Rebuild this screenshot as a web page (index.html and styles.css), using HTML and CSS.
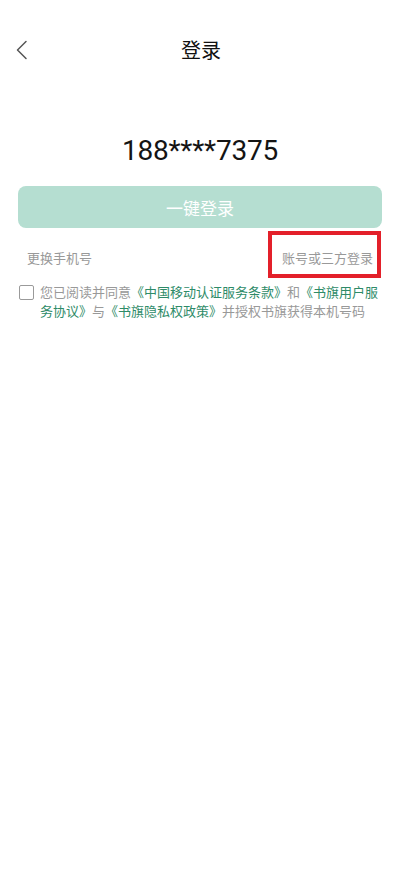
FILE: index.html
```html
<!DOCTYPE html>
<html lang="zh-CN">
<head>
  <meta charset="UTF-8" />
  <link rel="stylesheet" href="styles.css">
</head>
<body>

<div class="page">

  <!-- Top bar -->
  <div class="nav-bar">
    <a class="back-btn" href="#">
      <svg width="12" height="20" viewBox="0 0 12 20">
        <path d="M10 1.5 L1.5 10 L10 18.5" fill="none" stroke="#555" stroke-width="1.5" stroke-linecap="round" stroke-linejoin="round" />
      </svg>
    </a>
    <div class="nav-title">登录</div>
    <div class="nav-space"></div>
  </div>

  <!-- Masked number -->
  <div class="phone">188****7375</div>

  <button class="login-btn">一键登录</button>

  <div class="switch-row">
    <a class="switch-link" href="#">更换手机号</a>
    <a class="switch-link other" href="#">账号或三方登录</a>
  </div>

  <!-- Agreement -->
  <div class="agree">
    <span class="check-box"></span>
    <p class="agree-text">您已阅读并同意<a href="#">《中国移动认证服务条款》</a>和<a href="#">《书旗用户服务协议》</a>与<a href="#">《书旗隐私权政策》</a>并授权书旗获得本机号码</p>
  </div>

</div>

</body>
</html>
```

FILE: styles.css
```css
/* Page setup */
html, body {
  margin: 0;
  padding: 0;
  background: #fff;
  font-family: "Noto Sans CJK SC", "Noto Sans", sans-serif;
}

.page {
  width: 400px;
  min-height: 888px;
  padding-top: 20px;   /* status bar area */
  box-sizing: border-box;
}

/* Top bar */
.nav-bar {
  height: 60px;
  display: grid;
  grid-template-columns: 1fr auto 1fr;
  align-items: center;
}

.back-btn {
  display: flex;
  align-items: center;
  padding-left: 16px;
  height: 20px;
}

.nav-title {
  font-size: 20px;
  color: #111;
  line-height: 28px;
  padding-left: 2px;
}

/* Number */
.phone {
  margin-top: 54px;
  text-align: center;
  font-family: Roboto, "Noto Sans", sans-serif;
  font-size: 28px;
  line-height: 34px;
  color: #141414;
  letter-spacing: -0.2px;
}

.login-btn {
  display: block;
  margin: 18px 18px 0;
  width: calc(100% - 36px);
  height: 42px;
  border: none;
  border-radius: 8px;
  background: #b5ded1;
  color: #fff;
  font-family: inherit;
  font-size: 17px;
  padding: 0;
}

/* Secondary links */
.switch-row {
  margin-top: 3px;
  height: 47px;
  display: flex;
  justify-content: space-between;
  align-items: center;
  padding: 0 19px 0 27px;
}

.switch-link {
  font-size: 13px;
  line-height: 19px;
  color: #999;
  text-decoration: none;
  padding-top: 5px;
}

.switch-link.other {
  border: 4px solid #e3202a;
  padding: 13px 4px 7px 10px;
}

/* Agreement */
.agree {
  margin-top: 4px;
  display: flex;
  align-items: flex-start;
  gap: 6px;
  padding: 0 19px 0 19px;
}

.check-box {
  flex-shrink: 0;
  width: 13px;
  height: 13px;
  margin-top: 3px;
  border: 1px solid #9a9a9a;
  border-radius: 2px;
}

.agree-text {
  margin: 0;
  font-size: 13px;
  line-height: 19px;
  color: #999;
}

.agree-text a {
  color: #2e8b68;
  text-decoration: none;
}
```
